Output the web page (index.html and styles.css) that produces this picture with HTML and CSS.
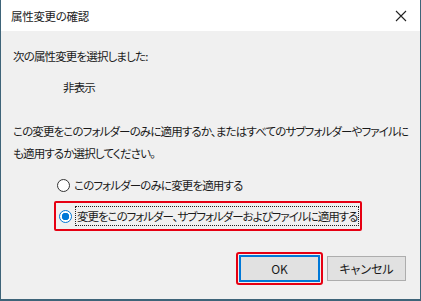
FILE: index.html
```html
<!DOCTYPE html>
<html lang="ja">
<head>
  <meta charset="UTF-8">
  <title>属性変更の確認</title>
  <link rel="stylesheet" href="styles.css">
</head>
<body>
  <div class="dialog">
    <div class="titlebar">
      <span class="title">属性変更の確認</span>
      <svg class="close" width="12" height="12" viewBox="0 0 12 12">
        <path d="M1 1L11 11M11 1L1 11" stroke="#222" stroke-width="1.1" fill="none"/>
      </svg>
    </div>
    <div class="content">
      <p class="lead">次の属性変更を選択しました:</p>
      <p class="attr">非表示</p>
      <p class="question">この変更をこのフォルダーのみに適用するか、またはすべてのサブフォルダーやファイルに<br>も適用するか選択してください。</p>
      <div class="options">
        <label class="option">
          <span class="radio"></span>
          <span class="text">このフォルダーのみに変更を適用する</span>
        </label>
        <label class="option selected">
          <span class="radio checked"></span>
          <span class="text focus">変更をこのフォルダー、サブフォルダーおよびファイルに適用する</span>
        </label>
      </div>
      <div class="buttons">
        <div class="mark">
          <button class="btn default">OK</button>
        </div>
        <button class="btn">キャンセル</button>
      </div>
    </div>
  </div>
</body>
</html>
```

FILE: styles.css
```css
body {
  margin: 0;
  background: #3e6479;
  font-family: "Noto Sans CJK JP", "Noto Sans", sans-serif;
  font-size: 11.5px;
  letter-spacing: -0.85px;
  font-feature-settings: "palt";
  color: #1a1a1a;
}
.dialog {
  width: 419px;
  height: 299px;
  margin-left: 1px;
  background: #f0f0f0;
  display: flex;
  flex-direction: column;
}
.titlebar {
  height: 31px;
  background: #fff;
  display: flex;
  align-items: center;
  justify-content: space-between;
  padding: 0 13px 0 10px;
}
.title {
  letter-spacing: -0.3px;
}
.content {
  flex: 1;
  padding: 14px 0 0 12px;
  display: flex;
  flex-direction: column;
  white-space: nowrap;
}
.content p {
  margin: 0;
  line-height: 22px;
}
.attr {
  margin-top: 9px !important;
  padding-left: 50px;
}
.question {
  margin-top: 22px !important;
}
.options {
  margin-top: 10px;
  padding-left: 41px;
  display: flex;
  flex-direction: column;
  align-items: flex-start;
}
.option {
  display: flex;
  align-items: center;
  height: 22px;
  padding-left: 3px;
}
.option.selected {
  height: 26px;
  margin-top: 5px;
  padding-right: 2px;
  border: 2px solid #e60012;
  border-radius: 2px;
}
.selected .text {
  letter-spacing: -1px;
}
.radio {
  width: 11px;
  height: 11px;
  border: 1px solid #333;
  border-radius: 50%;
  background: #fff;
  margin-right: 4px;
  flex: none;
}
.radio.checked {
  border-color: #0078d7;
  background: radial-gradient(circle, #0078d7 0 3.5px, #fff 4px);
}
.text.focus {
  outline: 1px dotted #222;
  padding: 1px 1px;
}
.buttons {
  margin-top: 21px;
  display: flex;
  align-items: center;
  gap: 4px;
  padding-left: 223px;
}
.mark {
  border: 2px solid #e60012;
  border-radius: 3px;
  padding: 1px;
}
.btn {
  width: 79px;
  height: 25px;
  background: #e1e1e1;
  border: 1px solid #adadad;
  font-family: inherit;
  font-size: 12px;
  font-feature-settings: "palt";
  color: #1a1a1a;
  padding: 0;
}
.btn.default {
  width: 81px;
  height: 27px;
  border: 2px solid #0078d7;
}
```
